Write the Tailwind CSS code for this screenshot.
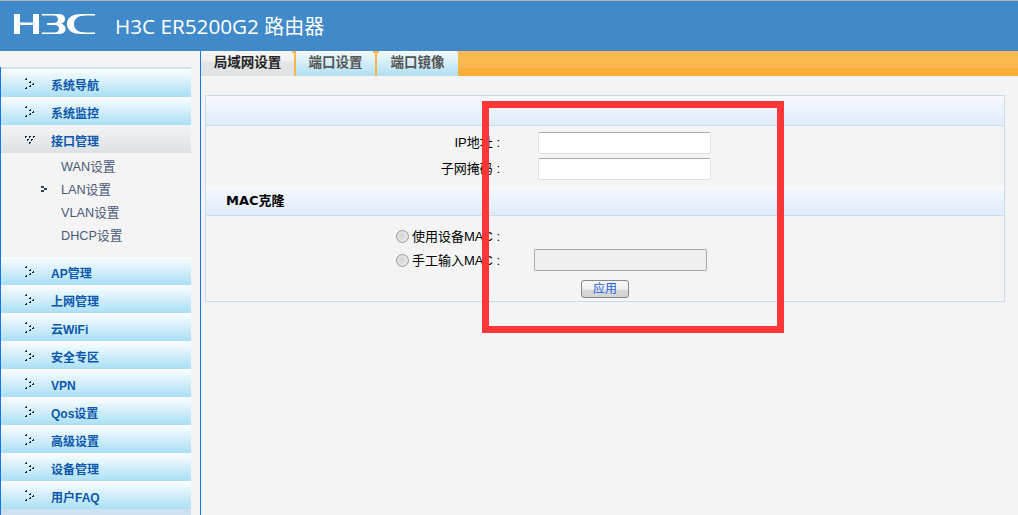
<!DOCTYPE html>
<html><head><meta charset="utf-8">
<script src="https://cdn.jsdelivr.net/npm/@tailwindcss/browser@4"></script>
</head>
<body class="w-[1018px] h-[515px] overflow-hidden bg-[#f4f4f4] font-['Liberation_Sans','Noto_Sans_CJK_SC',sans-serif] text-[13px] text-black relative">
<header class="h-[51px] bg-[#418ac9] border-t border-t-[#b4b4b4] flex items-center">
  <svg class="ml-[14px] mt-[-4px] w-[81px] h-[20px]" viewBox="0 0 81 20" fill="#fff">
    <path d="M0 0h6v8.500h13V0h6v20h-6V11H6v9H0z"/>
    <path d="M28 0H44C49 0 51 2 51 5C51 7.500 49.500 9 47 9.700C50 10.300 51.500 12 51.500 15C51.500 18 49 20 44 20H28V18.500H40C43.500 18.500 45 17 45 14.800C45 12.500 43.500 11 40 11H33V9H39C42.500 9 44 7.500 44 5.500C44 3 42.500 1.500 39 1.500H28Z"/>
    <path d="M81 0H67C58 0 53 4 53 10S58 20 67 20H81V18.500H72C64 18.500 60 15.500 60 10S64 1.500 72 1.500H81Z"/>
  </svg>
  <h1 class="ml-[20px] mt-[1px] text-[20px] leading-[26px] text-white font-normal font-['Open_Sans','Noto_Sans_CJK_SC',sans-serif]"><span class="text-[20.700px]">H3C ER5200G2</span> 路由器</h1>
</header>
<div class="flex h-[464px]">
  <aside class="w-[201px] shrink-0 border-r border-r-[#1a73e8] flex flex-col">
    <div class="mt-[16px] flex-1 border-l border-l-[#1a73e8] flex flex-col">
    <div class="w-[190px] border-t-2 border-t-[#cfe0f0]"></div>
    <a class="h-[28px] w-[190px] bg-gradient-to-b from-[#fbfeff] to-[#aadff5] flex items-center pl-[50px] pt-[6px] text-[12px] font-bold text-[#0b57ab] relative"><svg class="absolute left-[24px] top-[9px] w-[9px] h-[11px]" viewBox="0 0 9 11" fill="#123"><path d="M1 0h1v2H0V1h1zM5 3h1v2H4V4h1zM8 5h1v2H7V6h1zM5 7h1v2H4V8h1zM1 9h1v2H0v-1h1z"/></svg>系统导航</a>
    <a class="h-[28px] w-[190px] bg-gradient-to-b from-[#fbfeff] to-[#aadff5] flex items-center pl-[50px] pt-[6px] text-[12px] font-bold text-[#0b57ab] relative"><svg class="absolute left-[24px] top-[9px] w-[9px] h-[11px]" viewBox="0 0 9 11" fill="#123"><path d="M1 0h1v2H0V1h1zM5 3h1v2H4V4h1zM8 5h1v2H7V6h1zM5 7h1v2H4V8h1zM1 9h1v2H0v-1h1z"/></svg>系统监控</a>
    <a class="h-[28px] w-[190px] bg-gradient-to-b from-[#f3f5f6] to-[#dde1e4] flex items-center pl-[50px] pt-[6px] text-[12px] font-bold text-[#0b57ab] relative"><svg class="absolute left-[24px] top-[11px] w-[10px] h-[9px]" viewBox="0 0 10 9" fill="#123"><path d="M0 0h2v1H1v1H0zM4 0h2v1H5v1H4zM8 0h2v1H9v1H8zM2 3h2v1H3v1H2zM6 3h2v1H7v1H6zM4 6h2v1H5v1H4z"/></svg>接口管理</a>
    <ul class="h-[104px] w-[190px] pt-[3px] text-[12.700px] text-[#4a5a78]">
      <li class="h-[23px] leading-[23px] pl-[60px]">WAN设置</li>
      <li class="h-[23px] leading-[23px] pl-[60px] relative"><svg class="absolute left-[40px] top-[7px] w-[6px] h-[6px]" viewBox="0 0 6 6" fill="#345"><path d="M0 0h3v2H0zM0 4h3v2H0zM3 2h3v2H3z"/></svg>LAN设置</li>
      <li class="h-[23px] leading-[23px] pl-[60px]">VLAN设置</li>
      <li class="h-[23px] leading-[23px] pl-[60px]">DHCP设置</li>
    </ul>
    <a class="h-[28px] w-[190px] bg-gradient-to-b from-[#fbfeff] to-[#aadff5] flex items-center pl-[50px] pt-[6px] text-[12px] font-bold text-[#0b57ab] relative"><svg class="absolute left-[24px] top-[9px] w-[9px] h-[11px]" viewBox="0 0 9 11" fill="#123"><path d="M1 0h1v2H0V1h1zM5 3h1v2H4V4h1zM8 5h1v2H7V6h1zM5 7h1v2H4V8h1zM1 9h1v2H0v-1h1z"/></svg>AP管理</a>
    <a class="h-[28px] w-[190px] bg-gradient-to-b from-[#fbfeff] to-[#aadff5] flex items-center pl-[50px] pt-[6px] text-[12px] font-bold text-[#0b57ab] relative"><svg class="absolute left-[24px] top-[9px] w-[9px] h-[11px]" viewBox="0 0 9 11" fill="#123"><path d="M1 0h1v2H0V1h1zM5 3h1v2H4V4h1zM8 5h1v2H7V6h1zM5 7h1v2H4V8h1zM1 9h1v2H0v-1h1z"/></svg>上网管理</a>
    <a class="h-[28px] w-[190px] bg-gradient-to-b from-[#fbfeff] to-[#aadff5] flex items-center pl-[50px] pt-[6px] text-[12px] font-bold text-[#0b57ab] relative"><svg class="absolute left-[24px] top-[9px] w-[9px] h-[11px]" viewBox="0 0 9 11" fill="#123"><path d="M1 0h1v2H0V1h1zM5 3h1v2H4V4h1zM8 5h1v2H7V6h1zM5 7h1v2H4V8h1zM1 9h1v2H0v-1h1z"/></svg>云WiFi</a>
    <a class="h-[28px] w-[190px] bg-gradient-to-b from-[#fbfeff] to-[#aadff5] flex items-center pl-[50px] pt-[6px] text-[12px] font-bold text-[#0b57ab] relative"><svg class="absolute left-[24px] top-[9px] w-[9px] h-[11px]" viewBox="0 0 9 11" fill="#123"><path d="M1 0h1v2H0V1h1zM5 3h1v2H4V4h1zM8 5h1v2H7V6h1zM5 7h1v2H4V8h1zM1 9h1v2H0v-1h1z"/></svg>安全专区</a>
    <a class="h-[28px] w-[190px] bg-gradient-to-b from-[#fbfeff] to-[#aadff5] flex items-center pl-[50px] pt-[6px] text-[12px] font-bold text-[#0b57ab] relative"><svg class="absolute left-[24px] top-[9px] w-[9px] h-[11px]" viewBox="0 0 9 11" fill="#123"><path d="M1 0h1v2H0V1h1zM5 3h1v2H4V4h1zM8 5h1v2H7V6h1zM5 7h1v2H4V8h1zM1 9h1v2H0v-1h1z"/></svg>VPN</a>
    <a class="h-[28px] w-[190px] bg-gradient-to-b from-[#fbfeff] to-[#aadff5] flex items-center pl-[50px] pt-[6px] text-[12px] font-bold text-[#0b57ab] relative"><svg class="absolute left-[24px] top-[9px] w-[9px] h-[11px]" viewBox="0 0 9 11" fill="#123"><path d="M1 0h1v2H0V1h1zM5 3h1v2H4V4h1zM8 5h1v2H7V6h1zM5 7h1v2H4V8h1zM1 9h1v2H0v-1h1z"/></svg>Qos设置</a>
    <a class="h-[28px] w-[190px] bg-gradient-to-b from-[#fbfeff] to-[#aadff5] flex items-center pl-[50px] pt-[6px] text-[12px] font-bold text-[#0b57ab] relative"><svg class="absolute left-[24px] top-[9px] w-[9px] h-[11px]" viewBox="0 0 9 11" fill="#123"><path d="M1 0h1v2H0V1h1zM5 3h1v2H4V4h1zM8 5h1v2H7V6h1zM5 7h1v2H4V8h1zM1 9h1v2H0v-1h1z"/></svg>高级设置</a>
    <a class="h-[28px] w-[190px] bg-gradient-to-b from-[#fbfeff] to-[#aadff5] flex items-center pl-[50px] pt-[6px] text-[12px] font-bold text-[#0b57ab] relative"><svg class="absolute left-[24px] top-[9px] w-[9px] h-[11px]" viewBox="0 0 9 11" fill="#123"><path d="M1 0h1v2H0V1h1zM5 3h1v2H4V4h1zM8 5h1v2H7V6h1zM5 7h1v2H4V8h1zM1 9h1v2H0v-1h1z"/></svg>设备管理</a>
    <a class="h-[28px] w-[190px] bg-gradient-to-b from-[#fbfeff] to-[#aadff5] flex items-center pl-[50px] pt-[6px] text-[12px] font-bold text-[#0b57ab] relative"><svg class="absolute left-[24px] top-[9px] w-[9px] h-[11px]" viewBox="0 0 9 11" fill="#123"><path d="M1 0h1v2H0V1h1zM5 3h1v2H4V4h1zM8 5h1v2H7V6h1zM5 7h1v2H4V8h1zM1 9h1v2H0v-1h1z"/></svg>用户FAQ</a>
    <div class="w-[190px] h-[6px] bg-[#cfe0f0]"></div>
    </div>
  </aside>
  <main class="flex-1 min-w-0">
    <nav class="h-[25px] bg-[linear-gradient(#f9bb53,#f9b74e_66%,#fbae38_72%,#fbae38)] flex text-[13.500px] font-bold">
      <span class="relative w-[95px] border-r-2 border-r-[#f9b44a] bg-[linear-gradient(#f5f5f5,#f0f1f2_40%,#e2e5e6_45%,#e0e3e5)] text-[#222] flex items-center justify-center"><i class="absolute right-[-4px] top-0 w-[6px] h-[2px] bg-[#f9b44a]"></i>局域网设置</span>
      <span class="relative w-[81px] border-r-2 border-r-[#f9b44a] bg-gradient-to-b from-[#f2fafd] to-[#b0dff3] text-[#555] flex items-center justify-center"><i class="absolute right-[-4px] top-0 w-[6px] h-[2px] bg-[#f9b44a]"></i>端口设置</span>
      <span class="w-[81px] bg-gradient-to-b from-[#f2fafd] to-[#b0dff3] text-[#555] flex items-center justify-center rounded-tr-[3px]">端口镜像</span>
    </nav>
    <section class="ml-[4px] mt-[19px] w-[800px] h-[207px] border border-[#c9dcee]">
      <div class="h-[30px] border-b border-b-[#c9dcee] bg-gradient-to-b from-[#f8fafe] to-[#dfebfa]"></div>
      <div class="h-[60px] pt-[4px]">
        <div class="h-[26px] flex items-center"><label class="w-[294px] text-right">IP地址 :</label><input type="text" class="ml-[38px] w-[173px] h-[22px] bg-white border border-[#e0e0e8] border-t-[#aaa] rounded-[2px]"></div>
        <div class="h-[26px] flex items-center"><label class="w-[294px] text-right">子网掩码 :</label><input type="text" class="ml-[38px] w-[173px] h-[22px] bg-white border border-[#e0e0e8] border-t-[#aaa] rounded-[2px]"></div>
      </div>
      <div class="h-[30px] border-b border-b-[#c9dcee] bg-gradient-to-b from-[#f8fafe] to-[#dfebfa] flex items-center pl-[20px] font-bold font-['DejaVu_Sans','Noto_Sans_CJK_SC',sans-serif] text-[13px]">MAC克隆</div>
      <div class="pt-[9px]">
        <div class="h-[24px] flex items-center"><span class="ml-[190px] mb-[2px] w-[13px] h-[13px] rounded-full border border-[#999] bg-gradient-to-br from-[#c8c8c8] to-[#f0f0f0] shadow-[inset_0_0_0_2px_#e5e5e5]"></span><label class="w-[91px] text-right whitespace-nowrap">使用设备MAC :</label></div>
        <div class="h-[24px] flex items-center"><span class="ml-[190px] mb-[2px] w-[13px] h-[13px] rounded-full border border-[#999] bg-gradient-to-br from-[#c8c8c8] to-[#f0f0f0] shadow-[inset_0_0_0_2px_#e5e5e5]"></span><label class="w-[91px] text-right whitespace-nowrap">手工输入MAC :</label><input disabled class="ml-[34px] mb-[2px] w-[173px] h-[22px] bg-[#efefef] border border-[#aaa] rounded-[2px]"></div>
        <div class="flex mt-[7px]"><button class="ml-[375px] w-[48px] h-[18px] text-[12px] leading-[14px] text-[#1a5fe0] border border-[#888] rounded-[3px] bg-[linear-gradient(#f7f7f7,#f0f0f0_50%,#d8d8d8_60%,#d4d4d4)]">应用</button></div>
      </div>
    </section>
  </main>
</div>
<div class="absolute left-[482px] top-[101px] w-[302px] h-[232px] border-[7px] border-[#fe3638]"></div>
</body></html>
